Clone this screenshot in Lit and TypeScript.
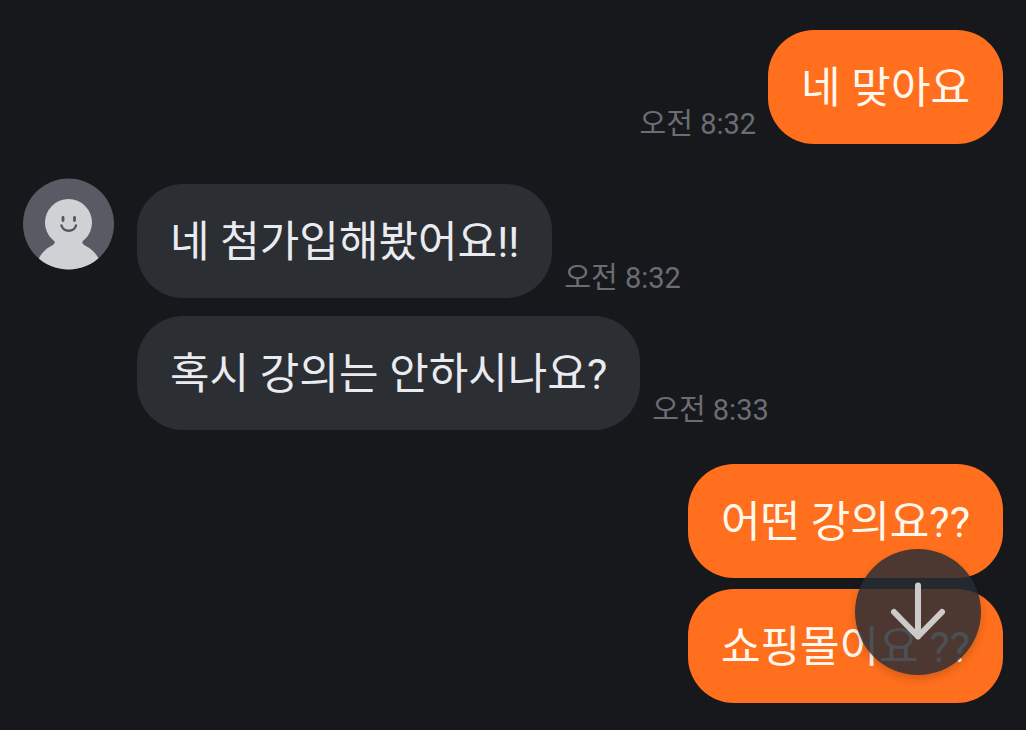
import { LitElement, html, css } from "lit";
import { customElement, property } from "lit/decorators.js";

interface Message {
  text: string;
  time?: string;
}

interface MessageGroup {
  mine: boolean;
  messages: Message[];
}

const groups: MessageGroup[] = [
  { mine: true, messages: [{ text: "네 맞아요", time: "오전 8:32" }] },
  {
    mine: false,
    messages: [
      { text: "네 첨가입해봤어요!!", time: "오전 8:32" },
      { text: "혹시 강의는 안하시나요?", time: "오전 8:33" },
    ],
  },
  { mine: true, messages: [{ text: "어떤 강의요??" }, { text: "쇼핑몰이요 ??" }] },
];

@customElement("user-avatar")
export class UserAvatar extends LitElement {
  static styles = css`
    :host {
      display: block;
      flex: none;
    }
    .avatar {
      display: block;
      width: 92px;
      height: 92px;
    }
  `;

  render() {
    return html`
      <svg class="avatar" viewBox="0 0 92 92" role="img" aria-label="프로필">
        <defs>
          <clipPath id="round"><circle cx="45.5" cy="46" r="45.5" /></clipPath>
        </defs>
        <g clip-path="url(#round)">
          <rect width="92" height="92" fill="#585b64" />
          <circle cx="45.5" cy="44.5" r="23.5" fill="#cfd1d4" />
          <path
            d="M30 61.5 Q34 65 29 67.5 Q20 72 15.5 81 L15.5 92 H76 V81 Q71 72 62 67.5 Q57 65 61 61.5 Z"
            fill="#cfd1d4"
          />
        </g>
        <g fill="none" stroke="#53565e" stroke-linecap="round">
          <path d="M40 39.5v3M51.5 39.5v3" stroke-width="2.8" />
          <path d="M38.5 47.5c2 7 12.5 7 14.5 0" stroke-width="2.4" />
        </g>
      </svg>
    `;
  }
}

@customElement("chat-message")
export class ChatMessage extends LitElement {
  @property({ type: Boolean, reflect: true }) mine = false;
  @property() text = "";
  @property() time = "";

  static styles = css`
    :host {
      display: flex;
      align-items: flex-end;
      gap: 12px;
    }
    :host([mine]) {
      flex-direction: row-reverse;
    }
    .bubble {
      margin: 0;
      padding: 28px 33px 26px;
      border-radius: 46px;
      background: #2b2e33;
      color: #e9ebf0;
      font-size: 43px;
      line-height: 60px;
    }
    :host([mine]) .bubble {
      background: #ff6f1d;
      color: #fff8ee;
    }
    .time {
      flex: none;
      padding-bottom: 2px;
      color: #6b6d73;
      font-size: 29px;
      line-height: 36px;
    }
  `;

  render() {
    return html`
      <p class="bubble">${this.text}</p>
      ${this.time ? html`<time class="time">${this.time}</time>` : null}
    `;
  }
}

@customElement("app-root")
export class AppRoot extends LitElement {
  static styles = css`
    :host {
      display: block;
      position: relative;
      box-sizing: border-box;
      min-height: 100vh;
      background: #17181c;
      font-family: Roboto, "Noto Sans CJK KR", sans-serif;
    }
    .chat {
      display: flex;
      flex-direction: column;
      gap: 34px;
      padding: 30px 23px 27px;
    }
    .group {
      display: flex;
      gap: 22px;
    }
    .list {
      display: flex;
      flex: 1;
      flex-direction: column;
      gap: 18px;
      padding-top: 6px;
    }
    .mine .list {
      gap: 11px;
      padding-top: 0;
    }
    .scroll {
      position: absolute;
      right: 45px;
      bottom: 55px;
      display: grid;
      place-items: center;
      width: 126px;
      height: 126px;
      padding: 0;
      border: 0;
      border-radius: 50%;
      background: rgba(40, 45, 53, 0.83);
      box-shadow: 0 4px 8px rgba(0, 0, 0, 0.16);
      cursor: pointer;
    }
    .arrow {
      width: 60px;
      height: 60px;
      fill: none;
      stroke: #cdcbca;
      stroke-width: 6;
      stroke-linecap: round;
      stroke-linejoin: round;
    }
  `;

  render() {
    return html`
      <main class="chat">
        ${groups.map(
          (group) => html`
            <section class="group ${group.mine ? "mine" : "theirs"}">
              ${group.mine ? null : html`<user-avatar></user-avatar>`}
              <div class="list">
                ${group.messages.map(
                  (m) => html`
                    <chat-message ?mine=${group.mine} .text=${m.text} .time=${m.time ?? ""}></chat-message>
                  `
                )}
              </div>
            </section>
          `
        )}
      </main>
      <button class="scroll" type="button" aria-label="맨 아래로">
        <svg class="arrow" viewBox="0 0 60 60" aria-hidden="true">
          <path d="M30 3.5V54.5M6 30L30 54.5L54 30" />
        </svg>
      </button>
    `;
  }
}
